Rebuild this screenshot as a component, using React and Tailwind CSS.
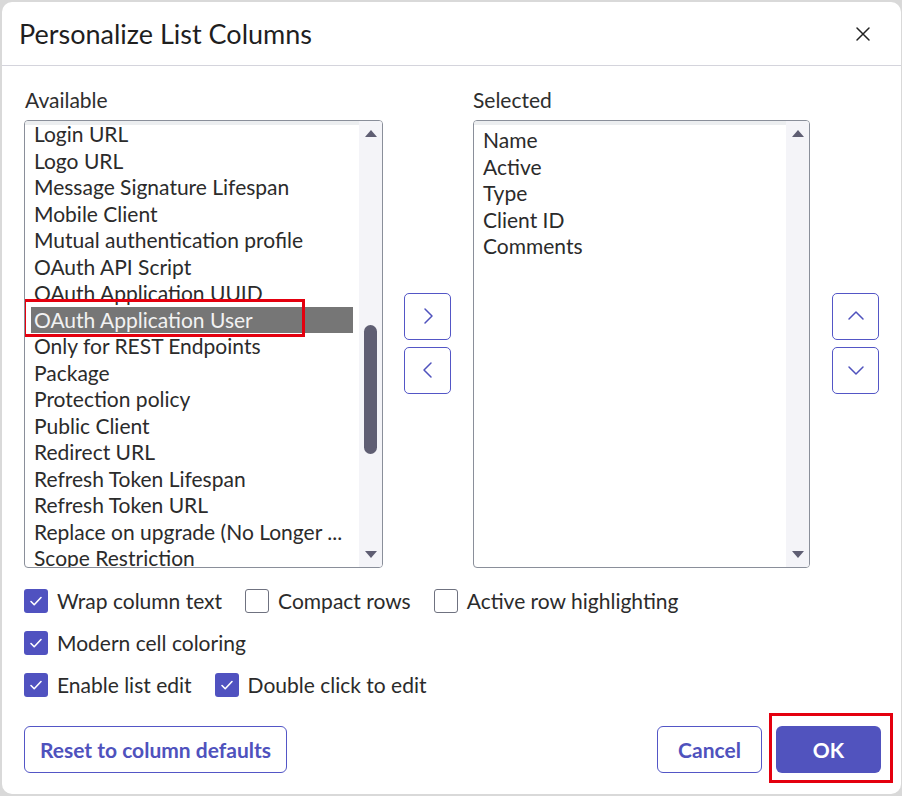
import React from "react";

const available = [
  "Login URL",
  "Logo URL",
  "Message Signature Lifespan",
  "Mobile Client",
  "Mutual authentication profile",
  "OAuth API Script",
  "OAuth Application UUID",
  "OAuth Application User",
  "Only for REST Endpoints",
  "Package",
  "Protection policy",
  "Public Client",
  "Redirect URL",
  "Refresh Token Lifespan",
  "Refresh Token URL",
  "Replace on upgrade (No Longer ...",
  "Scope Restriction",
];

const selected = ["Name", "Active", "Type", "Client ID", "Comments"];

function Chevron({ dir }) {
  const paths = {
    right: "M7 3l7 7-7 7",
    left: "M13 3l-7 7 7 7",
    up: "M3 13l7-7 7 7",
    down: "M3 7l7 7 7-7",
  };
  return (
    <svg width="20" height="20" viewBox="0 0 20 20" fill="none">
      <path d={paths[dir]} stroke="#4f52bd" strokeWidth="1.5" strokeLinecap="round" strokeLinejoin="round" />
    </svg>
  );
}

function MoveButton({ dir }) {
  return (
    <button className="flex h-[47px] w-[47px] items-center justify-center rounded-[5px] border border-[#5356c6] bg-white">
      <Chevron dir={dir} />
    </button>
  );
}

function ScrollTrack({ thumb }) {
  return (
    <div className="flex w-[23px] flex-col items-center bg-[#f4f4f8] pt-[9px] pb-[9px]">
      <div className="h-0 w-0 border-x-[6px] border-b-[7px] border-x-transparent border-b-[#5f5e73]" />
      {thumb ? (
        <div className="mt-[188px] h-[129px] w-[13px] rounded-full bg-[#5f5e73]" />
      ) : null}
      <div className="mt-auto h-0 w-0 border-x-[6px] border-t-[7px] border-x-transparent border-t-[#5f5e73]" />
    </div>
  );
}

function Check({ checked, label }) {
  return (
    <label className="flex items-center gap-[9px]">
      {checked ? (
        <span className="flex h-6 w-6 items-center justify-center rounded-[3px] bg-[#5052c0]">
          <svg width="14" height="14" viewBox="0 0 14 14" fill="none">
            <path d="M2 7.5l3.2 3.2L12 3.5" stroke="white" strokeWidth="1.6" strokeLinecap="round" strokeLinejoin="round" />
          </svg>
        </span>
      ) : (
        <span className="h-6 w-6 rounded-[3px] border border-[#6f7280] bg-white" />
      )}
      <span className="text-[21px] leading-6 text-[#2b2b2b]">{label}</span>
    </label>
  );
}

export default function App() {
  return (
    <div className="h-[796px] w-[902px] bg-[#d9d9d9] pt-[2px] pl-[2px] pr-[1px] pb-[2px]" style={{ fontFamily: "Lato, 'Noto Sans', sans-serif" }}>
      <div className="flex h-full flex-col rounded-[10px] bg-white">
        <header className="flex h-[64px] items-center justify-between border-b border-[#d4d4dc] pl-[17px] pr-[30px]">
          <h2 className="mt-[2px] text-[27px] text-[#1f1f1f]">Personalize List Columns</h2>
          <svg width="16" height="16" viewBox="0 0 16 16" fill="none">
            <path d="M2 2l12 12M14 2L2 14" stroke="#222" strokeWidth="1.5" strokeLinecap="round" />
          </svg>
        </header>

        <div className="flex flex-1 flex-col pl-[22px] pr-[20px] pt-[22px] pb-[21px]">
          <div className="flex text-[21px] leading-6 text-[#2e2e2e]">
            <div className="w-[449px] pl-[1px]">Available</div>
            <div>Selected</div>
          </div>

          <div className="mt-[8px] flex items-center">
            <div className="relative flex h-[448px] w-[359px] overflow-hidden rounded-[4px] border border-[#8a8f9a]">
              <div className="flex-1 pr-[6px] pl-[6px] shadow-[inset_0_4px_0_#eceef0]">
                {available.map((item) => (
                  <div
                    key={item}
                    className={
                      item === "OAuth Application User"
                        ? "whitespace-nowrap bg-[#767676] pl-[3px] text-[21px] leading-[26.5px] text-[#f2f2f2]"
                        : "whitespace-nowrap pl-[3px] text-[21px] leading-[26.5px] text-[#2b2b2b]"
                    }
                  >
                    {item}
                  </div>
                ))}
              </div>
              <ScrollTrack thumb />
              <div className="absolute left-[-2px] top-[178px] h-[38px] w-[282px] border-[3px] border-[#e4000f]" />
            </div>

            <div className="ml-[21px] mt-[-2px] flex flex-col gap-[7px]">
              <MoveButton dir="right" />
              <MoveButton dir="left" />
            </div>

            <div className="ml-[22px] flex h-[448px] w-[337px] overflow-hidden rounded-[4px] border border-[#8a8f9a]">
              <div className="flex-1 pl-[9px] pt-[6px] shadow-[inset_0_4px_0_#eceef0]">
                {selected.map((item) => (
                  <div key={item} className="text-[21px] leading-[26.5px] text-[#2b2b2b]">
                    {item}
                  </div>
                ))}
              </div>
              <ScrollTrack />
            </div>

            <div className="ml-[22px] mt-[-2px] flex flex-col gap-[7px]">
              <MoveButton dir="up" />
              <MoveButton dir="down" />
            </div>
          </div>

          <div className="mt-[21px] flex flex-col gap-[18px]">
            <div className="flex gap-[23px]">
              <Check checked label="Wrap column text" />
              <Check label="Compact rows" />
              <Check label="Active row highlighting" />
            </div>
            <div className="flex gap-[23px]">
              <Check checked label="Modern cell coloring" />
            </div>
            <div className="flex gap-[23px]">
              <Check checked label="Enable list edit" />
              <Check checked label="Double click to edit" />
            </div>
          </div>

          <div className="mt-auto flex items-center justify-between">
            <button className="h-[47px] w-[263px] rounded-[6px] border border-[#5356c6] bg-white text-[21px] font-bold text-[#4f52bd]">
              Reset to column defaults
            </button>
            <div className="flex gap-[14px]">
              <button className="h-[47px] w-[105px] rounded-[6px] border border-[#5356c6] bg-white text-[21px] font-bold text-[#4f52bd]">
                Cancel
              </button>
              <div className="relative">
                <button className="h-[47px] w-[105px] rounded-[6px] bg-[#5153be] text-[21px] font-bold text-white">
                  OK
                </button>
                <div className="absolute left-[-7px] top-[-13px] h-[70px] w-[124px] border-[3px] border-[#e4000f]" />
              </div>
            </div>
          </div>
        </div>
      </div>
    </div>
  );
}
